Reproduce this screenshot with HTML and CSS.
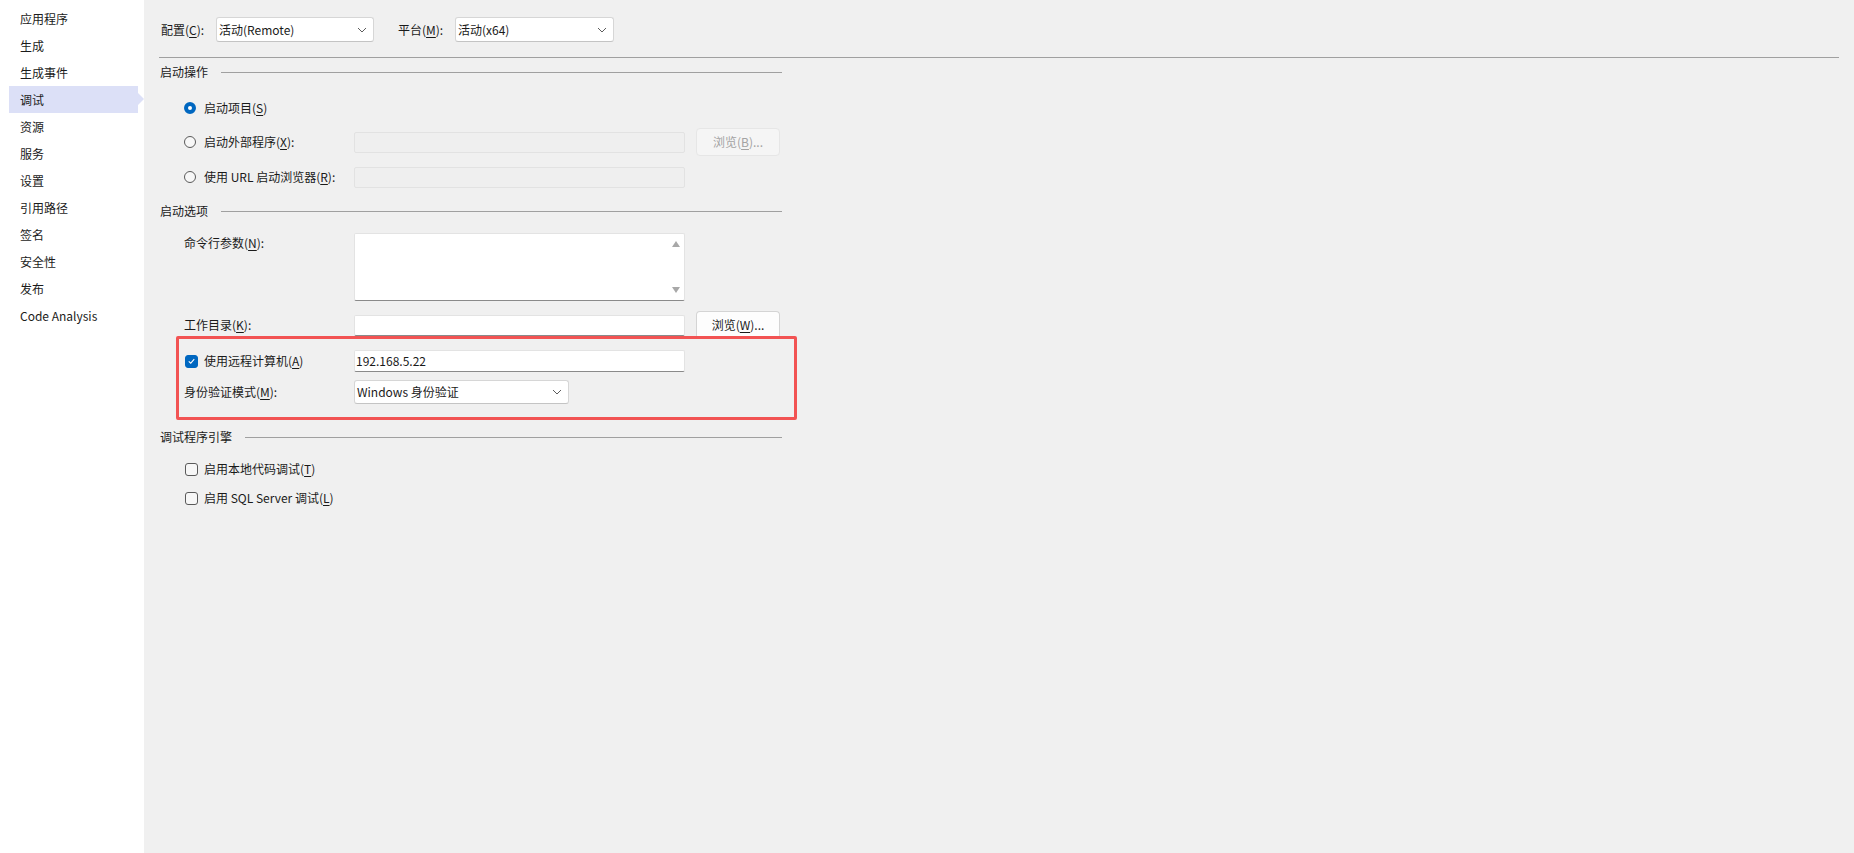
FILE: index.html
```html
<!DOCTYPE html>
<html lang="zh-CN">
<head>
<meta charset="utf-8">
<title>调试</title>
<link rel="stylesheet" href="styles.css">
</head>
<body>
<div class="app">
  <nav class="sidebar">
    <div class="nav-item">应用程序</div>
    <div class="nav-item">生成</div>
    <div class="nav-item">生成事件</div>
    <div class="nav-item active">调试</div>
    <div class="nav-item">资源</div>
    <div class="nav-item">服务</div>
    <div class="nav-item">设置</div>
    <div class="nav-item">引用路径</div>
    <div class="nav-item">签名</div>
    <div class="nav-item">安全性</div>
    <div class="nav-item">发布</div>
    <div class="nav-item">Code Analysis</div>
  </nav>

  <main class="content">
    <div class="toprow">
      <span class="toplabel tl1">配置(<u>C</u>):</span>
      <div class="combo c1"><span>活动(Remote)</span><svg class="chev" viewBox="0 0 10 6" width="10" height="6"><polyline points="1,1 5,5 9,1"/></svg></div>
      <span class="toplabel tl2">平台(<u>M</u>):</span>
      <div class="combo c2"><span>活动(x64)</span><svg class="chev" viewBox="0 0 10 6" width="10" height="6"><polyline points="1,1 5,5 9,1"/></svg></div>
    </div>
    <div class="rule"></div>

    <section class="group">
      <div class="ghead h1"><span>启动操作</span><i></i></div>
      <div class="row r-a">
        <div class="lab"><span class="radio on"></span>启动项目(<u>S</u>)</div>
      </div>
      <div class="row r-b">
        <div class="lab"><span class="radio"></span>启动外部程序(<u>X</u>):</div>
        <div class="tb disabled"></div>
        <div class="btn disabled">浏览(<u>B</u>)...</div>
      </div>
      <div class="row r-c">
        <div class="lab"><span class="radio"></span>使用 URL 启动浏览器(<u>R</u>):</div>
        <div class="tb disabled"></div>
      </div>

      <div class="ghead h2"><span>启动选项</span><i></i></div>
      <div class="row r-args">
        <div class="lab top">命令行参数(<u>N</u>):</div>
        <div class="textarea">
          <div class="sb">
            <svg viewBox="0 0 8 6" width="8" height="6"><polygon points="0,6 4,0 8,6"/></svg>
            <svg viewBox="0 0 8 6" width="8" height="6"><polygon points="0,0 8,0 4,6"/></svg>
          </div>
        </div>
      </div>
      <div class="row r-dir">
        <div class="lab">工作目录(<u>K</u>):</div>
        <div class="tb edit"></div>
        <div class="btn">浏览(<u>W</u>)...</div>
      </div>
      <div class="row r-remote">
        <div class="lab chk-lab"><span class="check on"><svg viewBox="0 0 12 12" width="12" height="12"><polyline points="3,6.3 5.2,8.4 9,4"/></svg></span>使用远程计算机(<u>A</u>)</div>
        <div class="tb edit value">192.168.5.22</div>
      </div>
      <div class="row r-auth">
        <div class="lab">身份验证模式(<u>M</u>):</div>
        <div class="combo c3"><span>Windows 身份验证</span><svg class="chev" viewBox="0 0 10 6" width="10" height="6"><polyline points="1,1 5,5 9,1"/></svg></div>
      </div>

      <div class="ghead h3"><span>调试程序引擎</span><i></i></div>
      <div class="row r-e1">
        <div class="lab chk-lab wide"><span class="check"></span>启用本地代码调试(<u>T</u>)</div>
      </div>
      <div class="row r-e2">
        <div class="lab chk-lab wide"><span class="check"></span>启用 SQL Server 调试(<u>L</u>)</div>
      </div>
    </section>

    <div class="highlight"></div>
  </main>
</div>
</body>
</html>
```

FILE: styles.css
```css
* { box-sizing: border-box; }

html, body {
  margin: 0;
  padding: 0;
  height: 100%;
}

body {
  font-family: "Noto Sans CJK SC", "Noto Sans", sans-serif;
  font-size: 12px;
  color: #1a1a1a;
  background: #f0f0f0;
}

u { text-decoration: underline; text-underline-offset: 2px; }

.app {
  display: flex;
  height: 853px;
}

/* ---------- sidebar ---------- */
.sidebar {
  width: 144px;
  flex: none;
  background: #ffffff;
  padding-top: 5px;
}

.nav-item {
  position: relative;
  z-index: 1;
  height: 27px;
  line-height: 27px;
  margin-left: 9px;
  width: 129px;
  padding-left: 11px;
  color: #1b1b1b;
  white-space: nowrap;
}

.nav-item.active {
  background: #dce0f7;
}

.nav-item.active::after {
  content: "";
  position: absolute;
  right: -6px;
  top: 7px;
  border-left: 6px solid #dce0f7;
  border-top: 6px solid transparent;
  border-bottom: 6px solid transparent;
}

/* ---------- content ---------- */
.content {
  position: relative;
  flex: 1;
  background: #f0f0f0;
  padding: 17px 15px 0 15px;
}

.toprow {
  display: flex;
  align-items: center;
  height: 25px;
}

.toplabel {
  white-space: nowrap;
  padding-left: 2px;
}
.tl1 { width: 57px; }
.tl2 { width: 59px; margin-left: 22px; }

.combo {
  display: flex;
  align-items: center;
  justify-content: space-between;
  height: 25px;
  background: #ffffff;
  border: 1px solid #d6d6d6;
  border-bottom-color: #c4c4c4;
  border-radius: 3px;
  padding: 0 6px 0 2px;
  color: #1a1a1a;
}
.combo span { line-height: 16px; }
.c1 { width: 158px; }
.c2 { width: 159px; }
.c3 { width: 215px; height: 24px; }

.chev {
  fill: none;
  stroke: #5c5c5c;
  stroke-width: 1;
}

.rule {
  height: 1px;
  background: #a0a0a0;
  margin-top: 15px;
}

.group {
  width: 623px;
}

.ghead {
  display: flex;
  align-items: center;
  height: 16px;
  line-height: 16px;
}
.ghead span { padding-left: 1px; margin-right: 13px; white-space: nowrap; }
.ghead i {
  flex: 1;
  height: 1px;
  background: #a0a0a0;
}
.h1 { margin-top: 6px; }
.h2 { margin-top: 12px; }
.h3 { margin-top: 25px; }

.row {
  display: flex;
  align-items: center;
  padding-left: 25px;
}

.lab {
  width: 170px;
  flex: none;
  display: flex;
  align-items: center;
  white-space: nowrap;
  line-height: 16px;
}
.lab.top { align-self: flex-start; padding-top: 2px; }
.lab.wide { width: 300px; }

.r-a { height: 28px; margin-top: 14px; }
.r-b { height: 28px; margin-top: 6px; }
.r-c { height: 28px; margin-top: 7px; }
.r-args { margin-top: 14px; align-items: flex-start; }
.r-dir { height: 28px; margin-top: 10px; }
.r-remote { height: 22px; margin-top: 11px; }
.r-auth { height: 24px; margin-top: 8px; }
.r-e1 { height: 20px; margin-top: 14px; }
.r-e2 { height: 20px; margin-top: 9px; }

.radio {
  width: 12px;
  height: 12px;
  border-radius: 50%;
  border: 1px solid #5a5a5a;
  background: #f7f7f7;
  margin-right: 8px;
  flex: none;
}
.radio.on {
  border: 4px solid #0067c0;
  background: #ffffff;
}

.check {
  display: flex;
  align-items: center;
  justify-content: center;
  width: 13px;
  height: 13px;
  border: 1px solid #5a5a5a;
  border-radius: 3px;
  background: #f7f7f7;
  margin-left: 1px;
  margin-right: 6px;
  flex: none;
}
.check.on {
  background: #0067c0;
  border-color: #0067c0;
}
.check svg {
  fill: none;
  stroke: #ffffff;
  stroke-width: 1.1;
}

.tb {
  width: 331px;
  height: 21px;
  flex: none;
}
.tb.disabled {
  background: #efefef;
  border: 1px solid #e2e2e2;
  border-radius: 2px;
}
.tb.edit {
  background: #ffffff;
  border: 1px solid #e3e3e3;
  border-bottom: 1px solid #8a8a8a;
  border-radius: 2px;
}
.tb.value {
  height: 22px;
  line-height: 20px;
  padding-left: 1px;
  color: #1a1a1a;
}

.textarea {
  width: 331px;
  height: 68px;
  background: #ffffff;
  border: 1px solid #e3e3e3;
  border-bottom: 1px solid #8a8a8a;
  border-radius: 2px;
  display: flex;
  justify-content: flex-end;
}
.sb {
  width: 16px;
  display: flex;
  flex-direction: column;
  justify-content: space-between;
  align-items: center;
  padding: 7px 0 7px 0;
}
.sb svg { fill: #a8a8a8; }

.btn {
  width: 84px;
  height: 28px;
  margin-left: 11px;
  display: flex;
  align-items: center;
  justify-content: center;
  background: #fdfdfd;
  border: 1px solid #d4d4d4;
  border-bottom-color: #bdbdbd;
  border-radius: 4px;
  color: #1a1a1a;
  line-height: 16px;
}
.btn.disabled {
  background: #f5f5f5;
  border-color: #e6e6e6;
  color: #a3a3a3;
}

/* annotation overlay */
.highlight {
  position: absolute;
  left: 32px;
  top: 336px;
  width: 621px;
  height: 84px;
  border: 3px solid #f25353;
  border-radius: 2px;
  pointer-events: none;
}
```
